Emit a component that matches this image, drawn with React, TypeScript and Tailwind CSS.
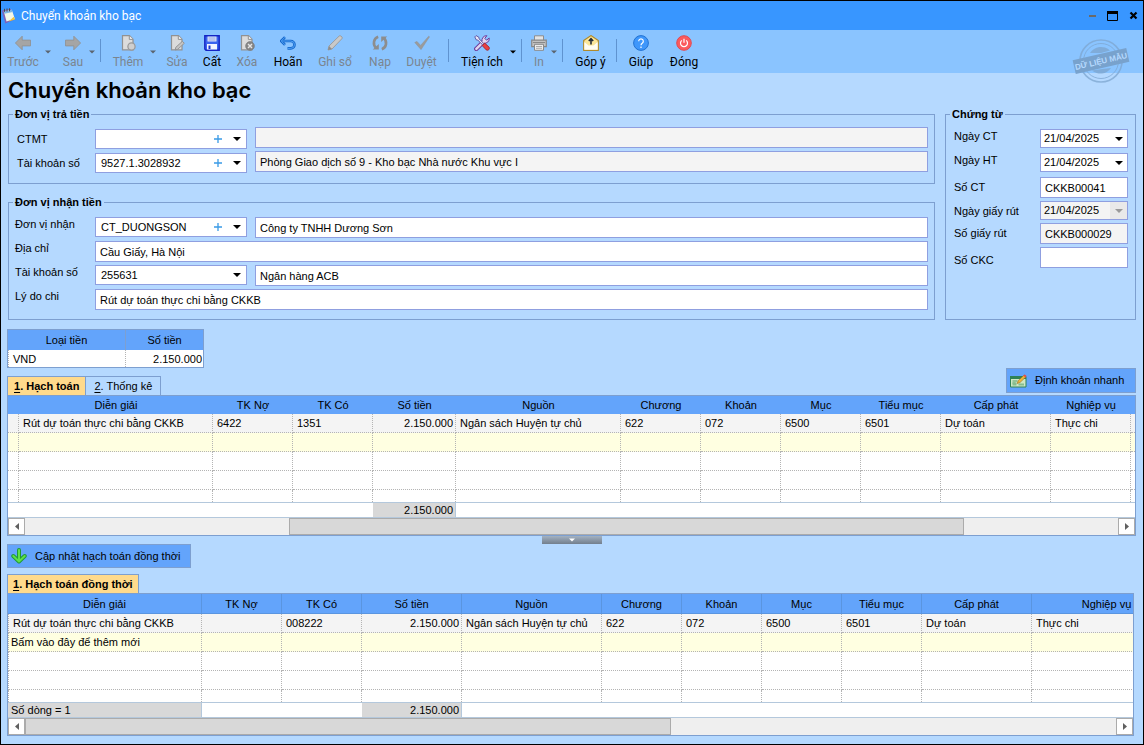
import React from "react";
import clsx from "clsx";

/* ---------- icons ---------- */

type IconProps = { children: React.ReactNode };

function Icon({ children }: IconProps) {
  return (
    <svg viewBox="0 0 16 16" className="h-4 w-4 shrink-0" aria-hidden="true">
      {children}
    </svg>
  );
}

function Page() {
  return (
    <>
      <path d="M2.5.7h7l3.500 3.500v10.600H2.500z" fill="#dcdcdc" stroke="#929292" strokeWidth="1.200" />
      <path d="M9.300.8v3.600H13" fill="#f2f2f2" stroke="#929292" />
    </>
  );
}

const icons = {
  back: (
    <Icon>
      <path d="M.4 8 7.200 1.200v3.900h8.300v5.800H7.200v3.900z" fill="#a5a5a5" stroke="#8f8f8f" strokeWidth=".8" />
    </Icon>
  ),
  forward: (
    <Icon>
      <path d="M15.600 8 8.800 1.200v3.900H.5v5.800h8.300v3.900z" fill="#a5a5a5" stroke="#8f8f8f" strokeWidth=".8" />
    </Icon>
  ),
  add: (
    <Icon>
      <Page />
      <circle cx="11.500" cy="11.500" r="3.600" fill="#cfcfcf" stroke="#9a9a9a" strokeWidth="1.300" />
    </Icon>
  ),
  edit: (
    <Icon>
      <Page />
      <path d="m6.800 12.300 6.600-6 1.900 2-6.600 6-2.600.7z" fill="#c4c4c4" stroke="#8f8f8f" strokeWidth=".9" />
    </Icon>
  ),
  save: (
    <Icon>
      <path d="M.8.8h14.400v14.400H2L.8 14z" fill="#3a63ee" stroke="#1424c4" strokeWidth="1.400" />
      <path d="M3.500 1.500h9v5h-9z" fill="#dfe6fb" />
      <path d="M4.500 3h7M4.500 5h7" stroke="#7d90d8" strokeWidth=".8" />
      <path d="M3 9h10v5.500H3z" fill="#f3f5ff" />
      <path d="M4.500 10.500h2V14h-2z" fill="#1c34cc" />
    </Icon>
  ),
  remove: (
    <Icon>
      <Page />
      <circle cx="11" cy="11" r="4.400" fill="#858585" stroke="#777" strokeWidth=".6" />
      <path d="m9 9 4 4m0-4-4 4" stroke="#e6e6e6" strokeWidth="1.400" />
    </Icon>
  ),
  undo: (
    <Icon>
      <path d="M5 2.200 1.200 6 5 9.800M1.500 6h9.300a3.700 3.700 0 0 1 0 7.400H7.500" fill="none" stroke="#1668cc" strokeWidth="2.600" />
      <path d="M5 2.200 1.200 6 5 9.800M1.500 6h9.300a3.700 3.700 0 0 1 0 7.400H7.500" fill="none" stroke="#4fa0f4" strokeWidth="1" />
    </Icon>
  ),
  pencil: (
    <Icon>
      <path d="M1 15l1-4L12.200 1a1.300 1.300 0 0 1 1.700 0l1 1a1.300 1.300 0 0 1 0 1.700L5 14z" fill="#c9c9c9" stroke="#999" strokeWidth=".9" />
      <path d="m1 15 1-4 3 3z" fill="#8c8c8c" />
    </Icon>
  ),
  reload: (
    <Icon>
      <path d="M6.200 1.800C1.300 3.500.7 9.500 4 13M9.800 14.200c4.900-1.700 5.500-7.700 2.200-11.200" fill="none" stroke="#8d8d8d" strokeWidth="2.600" />
      <path d="M.8 14.500h6V9zM15.200 1.500h-6V7z" fill="#8d8d8d" />
    </Icon>
  ),
  check: (
    <Icon>
      <path d="M.8 7.500 3 6.400l3.600 4L14.700 1.200l.8.600L7 14.600z" fill="#9b9b9b" stroke="#8f8f8f" strokeWidth=".5" />
    </Icon>
  ),
  tools: (
    <Icon>
      <path d="M2.300 13.900 10 6.300" stroke="#6c3c9c" strokeWidth="4.400" strokeLinecap="round" />
      <path d="M15.200 3 12.600 5.200 10.800 3.400 12.900.7A4.500 4.500 0 0 0 8.200 6.600l1.500 1.500a4.500 4.500 0 0 0 5.500-5.100z" fill="#e2d6ef" stroke="#6c3c9c" strokeWidth="1" />
      <path d="M2.300 13.900 10 6.300" stroke="#e2d6ef" strokeWidth="2.400" strokeLinecap="round" />
      <path d="M.8 1.900 2.100.6l2.700 1.600.4 1.700 4.300 4.400-1.200 1.200-4.400-4.300-1.700-.4z" fill="#e9e9f7" stroke="#574b9d" strokeWidth=".9" />
      <path d="m8.200 10.600 2.500-2.500 4.300 4c1.300 1.900-1 4-2.700 2.800z" fill="#ea4040" stroke="#a02430" strokeWidth=".9" />
    </Icon>
  ),
  print: (
    <Icon>
      <path d="M3.500.8h9V6h-9z" fill="#e3e3e3" stroke="#8d8d8d" />
      <path d="M.7 5.200h14.600v6.500H.7z" fill="#c2c2c2" stroke="#898989" strokeWidth="1.200" />
      <path d="M2 7.500h12" stroke="#898989" />
      <path d="M3.500 9.300h9v6h-9z" fill="#ededed" stroke="#898989" />
      <path d="M5 11.500h6M5 13.300h6" stroke="#999" strokeWidth=".8" />
    </Icon>
  ),
  feedback: (
    <Icon>
      <path d="M.7 5.500 8 .6l7.300 4.900v9.800H.7z" fill="#fbe69a" stroke="#b08a2c" strokeWidth="1.200" />
      <path d="m1.300 7 4.200 3.500h5L14.700 7v7.700H1.300z" fill="#fffdf4" />
      <path d="M8 9.500V4.500M5.800 6 8 3.700 10.200 6" stroke="#222b3a" strokeWidth="1.600" fill="none" />
    </Icon>
  ),
  help: (
    <Icon>
      <circle cx="8" cy="8" r="7.400" fill="#3f97fb" stroke="#2272d2" />
      <path d="M5.700 6.200a2.300 2.300 0 1 1 3.500 2C8.300 8.800 8 9.200 8 10.200M8 11.500v1.400" fill="none" stroke="#fff" strokeWidth="1.200" />
    </Icon>
  ),
  power: (
    <Icon>
      <circle cx="8" cy="8" r="7.300" fill="#fb5a5e" stroke="#e04a52" />
      <path d="M5.800 5.400a3.500 3.500 0 1 0 4.400 0M8 3.800v4" fill="none" stroke="#fff" strokeWidth="1.200" />
    </Icon>
  ),
};

function Caret({ className }: { className?: string }) {
  return (
    <svg viewBox="0 0 8 4" className={clsx("h-1 w-2 shrink-0", className)} aria-hidden="true">
      <path d="M0 0h8L4 4z" fill="currentColor" />
    </svg>
  );
}

function NotepadIcon() {
  return (
    <svg viewBox="0 0 16 16" className="h-4 w-4" aria-hidden="true">
      <path d="m.8 2.500 9-1.500 4 10.500-9.500 4z" fill="#7d63b8" />
      <path d="m2.800 3.200 8-1.400 3 9L5.500 13.500z" fill="#f3f8e8" />
      <path d="m2.600 3.200 8.200-1.400.8 2.200-8.200 1.700z" fill="#7fb6e6" />
      <path d="M3.500.8v3M6 .5v3M8.500.3v3" stroke="#4d4a44" strokeWidth="1" />
      <path d="m7.500 13.500 6.500-2-1.200-2.800z" fill="#f2c63c" />
    </svg>
  );
}

function Stamp() {
  return (
    <svg viewBox="0 0 60 48" className="h-12 w-15" role="img" aria-label="Dữ liệu mẫu">
      <g fill="none" stroke="#7da6cf" strokeOpacity=".75">
        <circle cx="30" cy="24" r="21" strokeWidth="1.600" />
        <circle cx="30" cy="24" r="17.500" strokeWidth="1" />
      </g>
      <path d="M19 16a13 13 0 0 1 20-2.500L30 16zM21 33.500a13 13 0 0 0 19-2.500l-9 1z" fill="#7da6cf" fillOpacity=".8" />
      <g transform="rotate(-13 30 24)">
        <rect x="2.500" y="17" width="55" height="14" fill="#78a2cd" />
        <text x="30" y="27" textAnchor="middle" fontSize="8" className="font-['Liberation_Sans',sans-serif] font-bold" fill="#b5d9ff">
          DỮ LIỆU MẪU
        </text>
      </g>
    </svg>
  );
}

/* ---------- toolbar ---------- */

type Tool = { label: string; icon: keyof typeof icons; box: string; enabled?: boolean; menu?: boolean; divider?: boolean };

const tools: Tool[] = [
  { label: "Trước", icon: "back", box: "w-[42px]", menu: true },
  { label: "Sau", icon: "forward", box: "w-9 pl-[6px]", menu: true, divider: true },
  { label: "Thêm", icon: "add", box: "w-[45px] pl-[3px]", menu: true },
  { label: "Sửa", icon: "edit", box: "w-10" },
  { label: "Cất", icon: "save", box: "w-[30px]", enabled: true },
  { label: "Xóa", icon: "remove", box: "w-10" },
  { label: "Hoãn", icon: "undo", box: "w-[42px]", enabled: true },
  { label: "Ghi sổ", icon: "pencil", box: "w-[52px]" },
  { label: "Nạp", icon: "reload", box: "w-[38px]" },
  { label: "Duyệt", icon: "check", box: "w-[45px]", divider: true },
  { label: "Tiện ích", icon: "tools", box: "w-[57px] pl-[3px]", enabled: true, menu: true, divider: true },
  { label: "In", icon: "print", box: "w-[25px] pl-[3px]", menu: true, divider: true },
  { label: "Góp ý", icon: "feedback", box: "w-[46px] pl-[3px]", enabled: true, divider: true },
  { label: "Giúp", icon: "help", box: "w-[42px]", enabled: true },
  { label: "Đóng", icon: "power", box: "w-11", enabled: true },
];

function Toolbar() {
  return (
    <nav className="relative flex h-[43px] items-stretch bg-[#8ac4ff] pl-px font-['Roboto',sans-serif] text-xs">
      {tools.map((t) => (
        <React.Fragment key={t.label}>
          <button
            type="button"
            className={clsx("flex shrink-0 flex-col items-center gap-[2px] pt-[5px] leading-[18px] whitespace-nowrap", t.box, t.enabled ? "text-black" : "text-[#7b858f]")}
          >
            {icons[t.icon]}
            <span>{t.label}</span>
          </button>
          {t.menu && (
            <button type="button" aria-label={`${t.label} – tùy chọn`} className={clsx("flex w-2 shrink-0 justify-center pt-5", t.enabled ? "text-black" : "text-[#5b6570]")}>
              <Caret className="w-[6px]" />
            </button>
          )}
          {t.divider && (
            <span className="flex w-2 shrink-0 justify-center pt-[9px]">
              <span className="h-[23px] w-px bg-[#5f93d0]" />
            </span>
          )}
        </React.Fragment>
      ))}
      <div className="absolute top-[7px] right-3">
        <Stamp />
      </div>
    </nav>
  );
}

/* ---------- form controls ---------- */

function TextBox({ id, label, value = "", readOnly, className }: { id: string; label?: string; value?: string; readOnly?: boolean; className?: string }) {
  return (
    <input
      id={id}
      type="text"
      aria-label={label}
      defaultValue={value}
      readOnly={readOnly}
      className={clsx("h-[21px] min-w-0 border border-[#8f9fe0] px-1 text-black outline-none", readOnly ? "bg-[#f4f4f4]" : "bg-white", className)}
    />
  );
}

function Combo({ id, value = "", add, className }: { id: string; value?: string; add?: boolean; className?: string }) {
  return (
    <div className={clsx("flex h-5 w-[152px] shrink-0 items-center border border-[#8f9fe0] bg-white pr-[5px]", className)}>
      <select id={id} defaultValue={value} className="h-full min-w-0 flex-1 appearance-none bg-transparent pl-[5px] text-black outline-none">
        <option value={value}>{value}</option>
      </select>
      {add && (
        <button type="button" aria-label="Thêm mới" className="mr-[11px] text-[#3a9be6]">
          <svg viewBox="0 0 8 8" className="h-2 w-2" aria-hidden="true">
            <path d="M4 0v8M0 4h8" stroke="currentColor" strokeWidth="1.300" />
          </svg>
        </button>
      )}
      <Caret />
    </div>
  );
}

function DateBox({ id, disabled }: { id: string; disabled?: boolean }) {
  return (
    <div className={clsx("flex h-[19px] w-[88px] items-center border border-[#8f9fe0]", disabled ? "bg-[#f4f4f4]" : "bg-white")}>
      <select id={id} disabled={disabled} defaultValue="21/04/2025" className="h-full min-w-0 flex-1 appearance-none bg-transparent pl-[3px] text-black opacity-100 outline-none">
        <option>21/04/2025</option>
      </select>
      <span className={clsx("flex h-full w-[17px] items-center justify-center", disabled && "bg-[#e9e9e9] text-[#9a9a9a]")}>
        <Caret />
      </span>
    </div>
  );
}

function Group({ title, className, children }: { title: string; className?: string; children: React.ReactNode }) {
  return (
    <fieldset className={clsx("min-w-0 border border-[#7d9fd0]", className)}>
      <legend className="ml-1 px-[2px] leading-[14px] font-bold">{title}</legend>
      {children}
    </fieldset>
  );
}

function PayerGroup() {
  return (
    <Group title="Đơn vị trả tiền">
      <div className="pt-[6px] pr-[6px] pb-2 pl-2">
        <div className="flex h-6 items-start">
          <label htmlFor="ctmt" className="w-[78px] shrink-0 leading-6">CTMT</label>
          <Combo id="ctmt" add className="mt-[2px] mr-2" />
          <TextBox id="ctmt-name" label="Tên CTMT" readOnly className="flex-1" />
        </div>
        <div className="flex h-6 items-start">
          <label htmlFor="payer-account" className="w-[78px] shrink-0 leading-6">Tài khoản số</label>
          <Combo id="payer-account" value="9527.1.3028932" add className="mt-[2px] mr-2" />
          <TextBox id="payer-bank" label="Kho bạc" readOnly value="Phòng Giao dịch số 9 - Kho bạc Nhà nước Khu vực I" className="flex-1" />
        </div>
      </div>
    </Group>
  );
}

function PayeeGroup() {
  const label = "w-20 shrink-0 leading-[14px]";
  return (
    <Group title="Đơn vị nhận tiền" className="mt-[11px]">
      <div className="px-[6px] pt-2 pb-[6px]">
        <div className="flex h-6 items-start">
          <label htmlFor="payee" className={label}>Đơn vị nhận</label>
          <Combo id="payee" value="CT_DUONGSON" add className="mr-2" />
          <TextBox id="payee-name" label="Tên đơn vị nhận" value="Công ty TNHH Dương Sơn" className="flex-1" />
        </div>
        <div className="flex h-6 items-start">
          <label htmlFor="address" className={label}>Địa chỉ</label>
          <TextBox id="address" value="Cầu Giấy, Hà Nội" className="flex-1" />
        </div>
        <div className="flex h-6 items-start">
          <label htmlFor="payee-account" className={label}>Tài khoản số</label>
          <Combo id="payee-account" value="255631" className="mr-2" />
          <TextBox id="payee-bank" label="Ngân hàng" value="Ngân hàng ACB" className="flex-1" />
        </div>
        <div className="flex h-6 items-start">
          <label htmlFor="reason" className={label}>Lý do chi</label>
          <TextBox id="reason" value="Rút dự toán thực chi bằng CKKB" className="flex-1" />
        </div>
      </div>
    </Group>
  );
}

function VoucherGroup() {
  return (
    <Group title="Chứng từ" className="w-[191px] shrink-0">
      <div className="grid grid-cols-[86px_88px] items-start gap-y-[3px] pt-2 pl-2">
        <label htmlFor="ct-date" className="h-[21px] leading-[14px]">Ngày CT</label>
        <DateBox id="ct-date" />
        <label htmlFor="ht-date" className="h-[21px] leading-[14px]">Ngày HT</label>
        <DateBox id="ht-date" />
        <label htmlFor="ct-no" className="leading-[21px]">Số CT</label>
        <TextBox id="ct-no" value="CKKB00041" />
        <label htmlFor="slip-date" className="h-[19px] leading-[21px]">Ngày giấy rút</label>
        <DateBox id="slip-date" disabled />
        <label htmlFor="slip-no" className="leading-[21px]">Số giấy rút</label>
        <TextBox id="slip-no" value="CKKB000029" readOnly />
        <label htmlFor="ckc-no" className="leading-[27px]">Số CKC</label>
        <TextBox id="ckc-no" />
      </div>
    </Group>
  );
}

/* ---------- grids ---------- */

type Column = { title: string; width: string; numeric?: boolean };

const postingColumns: Column[] = [
  { title: "", width: "w-[11px]" },
  { title: "Diễn giải", width: "w-[194px]" },
  { title: "TK Nợ", width: "w-20" },
  { title: "TK Có", width: "w-20" },
  { title: "Số tiền", width: "w-[83px]", numeric: true },
  { title: "Nguồn", width: "w-[165px]" },
  { title: "Chương", width: "w-20" },
  { title: "Khoản", width: "w-20" },
  { title: "Mục", width: "w-20" },
  { title: "Tiểu mục", width: "w-20" },
  { title: "Cấp phát", width: "w-[110px]" },
  { title: "Nghiệp vụ", width: "w-20" },
  { title: "", width: "w-auto" },
];

const concurrentColumns: Column[] = [
  { title: "Diễn giải", width: "w-[194px]" },
  { title: "TK Nợ", width: "w-20" },
  { title: "TK Có", width: "w-20" },
  { title: "Số tiền", width: "w-[100px]", numeric: true },
  { title: "Nguồn", width: "w-[140px]" },
  { title: "Chương", width: "w-20" },
  { title: "Khoản", width: "w-20" },
  { title: "Mục", width: "w-20" },
  { title: "Tiểu mục", width: "w-20" },
  { title: "Cấp phát", width: "w-[110px]" },
  { title: "Nghiệp vụ", width: "w-[150px]" },
];

type GridProps = {
  columns: Column[];
  row: string[];
  hint?: string;
  total: string[];
  tableClass: string;
  headClass: string;
  cellClass?: string;
  scroll: [string, string, string];
};

function ScrollArrow({ left }: { left?: boolean }) {
  return (
    <button type="button" aria-label={left ? "Cuộn trái" : "Cuộn phải"} className="flex w-[17px] items-center justify-center border border-[#ababab] bg-white">
      <svg viewBox="0 0 4 7" className="h-[7px] w-1" aria-hidden="true">
        <path d={left ? "M4 0v7L0 3.500z" : "M0 0v7l4-3.500z"} fill="#606060" />
      </svg>
    </button>
  );
}

function Grid({ columns, row, hint, total, tableClass, headClass, cellClass, scroll }: GridProps) {
  const blank = columns.map(() => "");
  const body = [
    { cells: row, tone: "bg-[#f4f4f4]" },
    { cells: [hint ?? "", ...blank.slice(1)], tone: "bg-[#ffffe1]" },
    { cells: blank, tone: "bg-white" },
    { cells: blank, tone: "bg-white" },
    { cells: blank, tone: "bg-white" },
  ];
  return (
    <div className="overflow-hidden border border-[#7d9fd0] bg-white">
      <table className={clsx("w-full table-fixed border-separate border-spacing-0", tableClass)}>
        <thead>
          <tr>
            {columns.map((c, i) => (
              <th key={i} scope="col" className={clsx("bg-[#63a4fb] p-0 text-center leading-[14px] font-normal", headClass, c.width)}>
                {c.title}
              </th>
            ))}
          </tr>
        </thead>
        <tbody>
          {body.map((r, ri) => (
            <tr key={ri} className={r.tone}>
              {r.cells.map((cell, ci) => (
                <td
                  key={ci}
                  className={clsx(
                    "border-r border-dotted border-[#b4b4b4] py-0 leading-[14px] whitespace-nowrap last:border-r-0",
                    cellClass,
                    ri === body.length - 1 ? "h-3" : "h-[19px] border-b",
                    columns[ci].numeric ? "pr-[2px] pl-0 text-right" : ri === 1 ? "pr-0 pl-[2px]" : "pr-0 pl-1",
                  )}
                >
                  {cell}
                </td>
              ))}
            </tr>
          ))}
        </tbody>
        <tfoot>
          <tr>
            {total.map((cell, ci) => (
              <td
                key={ci}
                className={clsx("h-4 border-y border-[#b4c8dc] py-0 leading-[14px] whitespace-nowrap", cell && "border-r bg-[#d8d8d8]", columns[ci].numeric ? "pr-[2px] pl-0 text-right" : "pr-0 pl-[3px]")}
              >
                {cell}
              </td>
            ))}
          </tr>
        </tfoot>
      </table>
      <div className="flex h-[17px] bg-[#efefef]">
        <ScrollArrow left />
        <div className={scroll[0]} />
        <div className={clsx("border border-[#ababab] bg-[#d8d8d8]", scroll[1])} />
        <div className={scroll[2]} />
        <ScrollArrow />
      </div>
    </div>
  );
}

function Tab({ index, active, className, children }: { index: number; active?: boolean; className: string; children: React.ReactNode }) {
  return (
    <button
      type="button"
      role="tab"
      aria-selected={!!active}
      className={clsx("h-5 border border-b-0 border-[#7d9fd0] pb-[2px] leading-4 whitespace-nowrap", active ? "bg-[#ffda8c] font-bold" : "border-l-0", className)}
    >
      <span className="underline underline-offset-2">{index}</span>. {children}
    </button>
  );
}

/* ---------- page ---------- */

export default function App() {
  return (
    <div className="flex min-h-screen flex-col border border-black bg-[#b5d9ff] font-['Liberation_Sans',Arial,sans-serif] text-[11px] text-black">
      <header className="flex h-[29px] items-center bg-[#3896ff] pr-[5px] font-['Roboto',sans-serif] text-xs text-white">
        <NotepadIcon />
        <span className="ml-1 flex-1">Chuyển khoản kho bạc</span>
        <div className="flex items-center gap-[11px] text-black">
          <button type="button" aria-label="Thu nhỏ">
            <svg viewBox="0 0 7 10" className="h-[10px] w-[7px]"><path d="M0 5h7" stroke="#6a6a6a" strokeWidth="2" /></svg>
          </button>
          <button type="button" aria-label="Phóng to">
            <svg viewBox="0 0 11 10" className="h-[10px] w-[11px]"><path d="M.5.5h10v9H.5z" fill="none" stroke="#000" /><path d="M0 0h11v3H0z" /></svg>
          </button>
          <button type="button" aria-label="Đóng cửa sổ">
            <svg viewBox="0 0 9 9" className="h-[9px] w-[9px]"><path d="m1.500 1.500 6 6m0-6-6 6" stroke="#000" strokeWidth="2.200" /></svg>
          </button>
        </div>
      </header>

      <Toolbar />

      <main className="flex flex-1 flex-col pr-[7px] pb-2 pl-[6px]">
        <h1 className="h-[34px] pl-px font-['Inter',sans-serif] text-[22px] leading-[34px] font-semibold">Chuyển khoản kho bạc</h1>

        <form className="flex gap-[10px] pl-px">
          <div className="min-w-0 flex-1">
            <PayerGroup />
            <PayeeGroup />
          </div>
          <VoucherGroup />
        </form>

        <table className="mt-[9px] w-[197px] table-fixed border-separate border-spacing-0 border border-[#7d9fd0] bg-white">
          <thead>
            <tr className="bg-[#63a4fb]">
              <th scope="col" className="h-5 w-[118px] border-r border-[#7d9fd0] p-0 text-center font-normal">Loại tiền</th>
              <th scope="col" className="h-5 p-0 text-center font-normal">Số tiền</th>
            </tr>
          </thead>
          <tbody>
            <tr>
              <td className="h-[17px] border-x border-dotted border-[#b4b4b4] py-0 pr-0 pl-1 leading-[14px]">VND</td>
              <td className="h-[17px] py-0 pr-px pl-0 text-right leading-[14px]">2.150.000</td>
            </tr>
          </tbody>
        </table>

        <div className="flex h-7 items-end justify-between">
          <div role="tablist" className="flex">
            <Tab index={1} active className="px-[6px]">Hạch toán</Tab>
            <Tab index={2} className="px-2">Thống kê</Tab>
          </div>
          <button type="button" className="mb-[3px] flex h-[25px] w-[130px] items-center gap-2 border border-[#7d9fd0] bg-[#63a4fb] pl-[3px] whitespace-nowrap">
            <svg viewBox="0 0 17 14" className="h-[14px] w-[17px]" aria-hidden="true">
              <path d="M.5 2.500h15.500v10.500H.5z" fill="#cfe8c4" stroke="#2f8257" />
              <path d="M0 2h16v3H0z" fill="#2f8257" />
              <path d="M2.500 7h5M2.500 9h3" stroke="#58a070" />
              <path d="M2.500 8.500h4v3h-4zM8.500 9.500H14v2H8.500z" fill="#86bd8e" />
              <path d="m7.200 9.500 1-2.800 6-5.700 1.800 1.800-6 5.700z" fill="#eeb63a" stroke="#9a6b22" strokeWidth=".6" />
              <path d="m13.500 1.700 1.300-1.300L16.600 2l-1.300 1.400z" fill="#e8484c" />
            </svg>
            Định khoản nhanh
          </button>
        </div>

        <div className="-mt-px">
          <Grid
            columns={postingColumns}
            row={["", "Rút dự toán thực chi bằng CKKB", "6422", "1351", "2.150.000", "Ngân sách Huyện tự chủ", "622", "072", "6500", "6501", "Dự toán", "Thực chi", ""]}
            total={["", "", "", "", "2.150.000", "", "", "", "", "", "", "", ""]}
            tableClass="min-w-[1127px]"
            headClass="h-[18px]"
            scroll={["flex-[264]", "flex-[675]", "flex-[154]"]}
          />
        </div>

        <button type="button" aria-label="Thu gọn" className="mx-auto flex h-2 w-15 items-center justify-center bg-linear-to-b from-[#a3b2c2] to-[#737f8d] text-white">
          <Caret className="w-[6px]" />
        </button>

        <button type="button" className="flex h-6 w-[184px] items-center gap-2 border border-[#7d9fd0] bg-[#63a4fb] pl-[3px] whitespace-nowrap">
          <svg viewBox="0 0 16 16" className="h-4 w-4" aria-hidden="true">
            <path d="M8 2v10.500M2.300 8 8 13.500 13.700 8" fill="none" stroke="#1f9a35" strokeWidth="4" strokeLinejoin="round" strokeLinecap="round" />
            <path d="M8 2v10.500M2.300 8 8 13.500 13.700 8" fill="none" stroke="#5fe04a" strokeWidth="2" strokeLinejoin="round" strokeLinecap="round" />
          </svg>
          Cập nhật hạch toán đồng thời
        </button>

        <div role="tablist" className="mt-[6px] flex">
          <Tab index={1} active className="px-[5px]">Hạch toán đồng thời</Tab>
        </div>
        <div className="-mt-px mr-[2px]">
          <Grid
            columns={concurrentColumns}
            row={["Rút dự toán thực chi bằng CKKB", "", "008222", "2.150.000", "Ngân sách Huyện tự chủ", "622", "072", "6500", "6501", "Dự toán", "Thực chi"]}
            hint="Bấm vào đây để thêm mới"
            total={["Số dòng = 1", "", "", "2.150.000", "", "", "", "", "", "", ""]}
            tableClass="min-w-[1174px]"
            headClass="h-5 border-r border-b border-[#5a95e0]"
            cellClass="first:border-l"
            scroll={["flex-none", "flex-[645]", "flex-[446]"]}
          />
        </div>
      </main>
    </div>
  );
}
